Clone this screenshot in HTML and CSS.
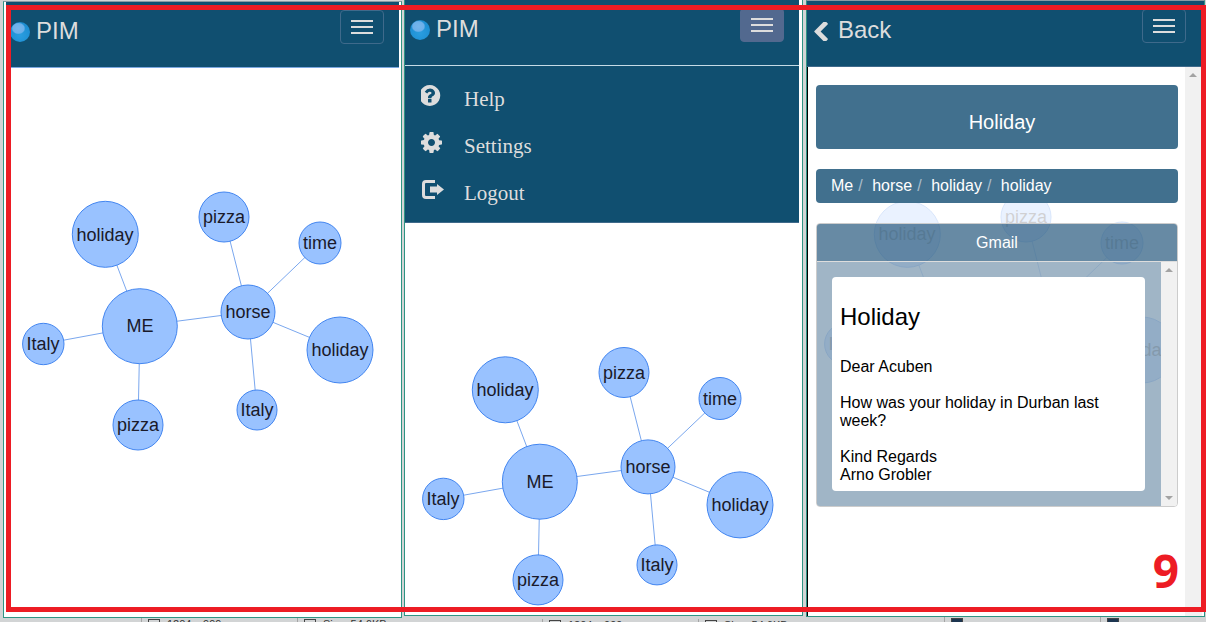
FILE: index.html
```html
<!DOCTYPE html>
<html lang="en">

<head>
    <meta charset="UTF-8">
    <title>PIM</title>
    <link rel="stylesheet" href="styles.css">
</head>

<body>
    <div class="screen">

        <!-- graph view -->
        <div class="column column-one">
            <div class="window window-one">
                <div class="navbar line-blue">
                    <div class="brand"><span class="logo"></span>PIM</div>
                    <div class="burger"><span></span><span></span><span></span></div>
                </div>
                <svg class="graph graph-one" width="395" height="548">
                    <line x1="136" y1="258" x2="101" y2="166"/><line x1="136" y1="258" x2="39" y2="276"/><line x1="136" y1="258" x2="134" y2="357"/><line x1="136" y1="258" x2="244" y2="244"/><line x1="244" y1="244" x2="220" y2="149"/><line x1="244" y1="244" x2="316" y2="175"/><line x1="244" y1="244" x2="336" y2="282"/><line x1="244" y1="244" x2="253" y2="342"/>
                    <circle cx="135.800" cy="258.200" r="37.500"/><text x="136" y="258" dy=".35em">ME</text>
                    <circle cx="101.300" cy="166.300" r="33"/><text x="101" y="166.600" dy=".35em">holiday</text>
                    <circle cx="39.300" cy="276" r="20.700"/><text x="39" y="276" dy=".35em">Italy</text>
                    <circle cx="134" cy="357" r="25"/><text x="134" y="357" dy=".35em">pizza</text>
                    <circle cx="244" cy="244" r="27"/><text x="244" y="244" dy=".35em">horse</text>
                    <circle cx="220" cy="149" r="25"/><text x="220" y="149" dy=".35em">pizza</text>
                    <circle cx="316" cy="175" r="21"/><text x="316" y="175" dy=".35em">time</text>
                    <circle cx="336" cy="282" r="33"/><text x="336" y="282" dy=".35em">holiday</text>
                    <circle cx="253" cy="342" r="20"/><text x="253" y="342" dy=".35em">Italy</text>
                </svg>
            </div>
            <div class="status">
                <div class="status-cell"><i class="status-icon"></i>1204 x 999</div>
                <div class="status-cell"><i class="status-icon"></i>Size: 54.6KB</div>
            </div>
        </div>

        <!-- graph view with the menu open -->
        <div class="column column-two">
            <div class="window window-two">
                <div class="navbar line-pale">
                    <div class="brand"><span class="logo"></span>PIM</div>
                    <div class="burger burger-active"><span></span><span></span><span></span></div>
                </div>
                <ul class="menu">
                    <li>
                        <svg class="menu-icon" viewBox="128 128 1536 1536"><path d="M896 1376v-192q0-14-9-23t-23-9h-192q-14 0-23 9t-9 23v192q0 14 9 23t23 9h192q14 0 23-9t9-23zm256-672q0-88-55.5-163t-138.5-116-170-41q-243 0-371 213-15 24 8 42l132 100q7 6 19 6 16 0 25-12 53-68 86-92 34-24 86-24 48 0 85.5 26t37.5 59q0 38-20 61t-68 45q-63 28-115.5 86.5t-52.5 125.5v36q0 14 9 23t23 9h192q14 0 23-9t9-23q0-19 21.5-49.5t54.5-49.5q32-18 49-28.5t46-35 44.5-48 28-60.5 12.5-81zm384 192q0 209-103 385.5t-279.5 279.5-385.5 103-385.5-103-279.5-279.5-103-385.5 103-385.5 279.5-279.5 385.5-103 385.5 103 279.5 279.5 103 385.5z"/></svg>
                        Help
                    </li>
                    <li>
                        <svg class="menu-icon" viewBox="128 128 1536 1536"><path d="M1152 896q0-106-75-181t-181-75-181 75-75 181 75 181 181 75 181-75 75-181zm512-109v222q0 12-8 23t-20 13l-185 28q-19 54-39 91 35 50 107 138 10 12 10 25t-9 23q-27 37-99 108t-94 71q-12 0-26-9l-138-108q-44 23-91 38-16 136-29 186-7 28-36 28h-222q-14 0-24.5-8.5t-11.5-21.5l-28-184q-49-16-90-37l-141 107q-10 9-25 9-14 0-25-11-126-114-165-168-7-10-7-23 0-12 8-23 15-21 51-66.5t54-70.5q-27-50-41-99l-183-27q-13-2-21-12.5t-8-23.5v-222q0-12 8-23t19-13l186-28q14-46 39-92-40-57-107-138-10-12-10-24 0-10 9-23 26-36 98.5-107.5t94.5-71.5q13 0 26 10l138 107q44-23 91-38 16-136 29-186 7-28 36-28h222q14 0 24.5 8.5t11.5 21.5l28 184q49 16 90 37l142-107q9-9 24-9 13 0 25 10 129 119 165 170 7 8 7 22 0 12-8 23-15 21-51 66.5t-54 70.5q26 50 41 98l183 28q13 2 21 12.5t8 23.5z"/></svg>
                        Settings
                    </li>
                    <li>
                        <svg class="menu-icon logout-icon" viewBox="0 0 24 21"><path class="logout-door" d="M14 2.500H5Q2.500 2.500 2.500 5V16Q2.500 18.500 5 18.500H14"/><path d="M9 7.500h7V5l7 5.500-7 5.500v-2.500H9z"/></svg>
                        Logout
                    </li>
                </ul>
                <svg class="graph graph-two" width="395" height="400" viewBox="0 -.5 395 400">
                    <line x1="136" y1="258" x2="101" y2="166"/><line x1="136" y1="258" x2="39" y2="275.400"/><line x1="136" y1="258" x2="134" y2="356.400"/><line x1="136" y1="258" x2="244" y2="243.400"/><line x1="244" y1="243.400" x2="220" y2="149"/><line x1="244" y1="243.400" x2="316" y2="175"/><line x1="244" y1="243.400" x2="336" y2="281.400"/><line x1="244" y1="243.400" x2="253" y2="341.400"/>
                    <circle cx="135.800" cy="258.200" r="37.500"/><text x="136" y="258" dy=".35em">ME</text>
                    <circle cx="101.300" cy="166.300" r="33"/><text x="101" y="166.600" dy=".35em">holiday</text>
                    <circle cx="39.300" cy="275.400" r="20.700"/><text x="39" y="275.400" dy=".35em">Italy</text>
                    <circle cx="134" cy="356.400" r="25"/><text x="134" y="356.400" dy=".35em">pizza</text>
                    <circle cx="244" cy="243.400" r="27"/><text x="244" y="243.400" dy=".35em">horse</text>
                    <circle cx="220" cy="149" r="25"/><text x="220" y="149" dy=".35em">pizza</text>
                    <circle cx="316" cy="175" r="21"/><text x="316" y="175" dy=".35em">time</text>
                    <circle cx="336" cy="281.400" r="33"/><text x="336" y="281.400" dy=".35em">holiday</text>
                    <circle cx="253" cy="341.400" r="20"/><text x="253" y="341.400" dy=".35em">Italy</text>
                </svg>
            </div>
            <div class="status">
                <div class="status-cell"><i class="status-icon"></i>1204 x 999</div>
                <div class="status-cell"><i class="status-icon"></i>Size: 54.6KB</div>
            </div>
        </div>

        <!-- message view, graph shows faintly behind it -->
        <div class="column column-three">
            <div class="window window-three">
                <div class="navbar line-grey navbar-three">
                    <div class="brand">
                        <svg class="back-icon" viewBox="403 109 1043 1446"><path d="M1427 301l-531 531 531 531q19 19 19 45t-19 45l-166 166q-19 19-45 19t-45-19l-742-742q-19-19-19-45t19-45l742-742q19-19 45-19t45 19l166 166q19 19 19 45t-19 45z"/></svg>
                        Back
                    </div>
                    <div class="burger"><span></span><span></span><span></span></div>
                </div>
                <div class="page">
                    <svg class="graph graph-faint" width="395" height="540">
                        <line x1="136" y1="258" x2="101" y2="166"/><line x1="136" y1="258" x2="39" y2="276"/><line x1="136" y1="258" x2="134" y2="357"/><line x1="136" y1="258" x2="244" y2="244"/><line x1="244" y1="244" x2="220" y2="149"/><line x1="244" y1="244" x2="316" y2="175"/><line x1="244" y1="244" x2="336" y2="282"/><line x1="244" y1="244" x2="253" y2="342"/>
                        <circle cx="135.800" cy="258.200" r="37.500"/><text x="136" y="258" dy=".35em">ME</text>
                        <circle cx="101.300" cy="166.300" r="33"/><text x="101" y="165.800" dy=".35em">holiday</text>
                        <circle cx="39.300" cy="276" r="20.700"/><text x="39" y="276" dy=".35em">Italy</text>
                        <circle cx="134" cy="357" r="25"/><text x="134" y="357" dy=".35em">pizza</text>
                        <circle cx="244" cy="244" r="27"/><text x="244" y="244" dy=".35em">horse</text>
                        <circle cx="220" cy="149" r="25"/><text x="220" y="149" dy=".35em">pizza</text>
                        <circle cx="316" cy="175" r="21"/><text x="316" y="175" dy=".35em">time</text>
                        <circle cx="336" cy="282" r="33"/><text x="336" y="282" dy=".35em">holiday</text>
                        <circle cx="253" cy="342" r="20"/><text x="253" y="342" dy=".35em">Italy</text>
                    </svg>
                    <div class="content">
                        <div class="title-card">Holiday</div>
                        <div class="crumbs">
                            <span>Me</span><span class="crumb-sep">/</span>
                            <span>horse</span><span class="crumb-sep">/</span>
                            <span>holiday</span><span class="crumb-sep">/</span>
                            <span>holiday</span>
                        </div>
                        <div class="mail">
                            <div class="mail-head">Gmail</div>
                            <div class="mail-body">
                                <div class="mail-scroll">
                                    <div class="message">
                                        <h3>Holiday</h3>
                                        <p>Dear Acuben<br><br>How was your holiday in Durban last week?<br><br>Kind Regards<br>Arno Grobler</p>
                                    </div>
                                </div>
                                <div class="scrollbar"><i class="arrow-up"></i><i class="arrow-down"></i></div>
                            </div>
                        </div>
                    </div>
                    <div class="scrollbar scrollbar-page"><i class="arrow-up"></i><i class="arrow-down"></i></div>
                </div>
            </div>
            <div class="status">
                <div class="status-cell"><i class="status-icon status-icon-dark"></i></div>
                <div class="status-cell"><i class="status-icon status-icon-dark"></i></div>
            </div>
        </div>

        <!-- red annotation drawn on top of the screenshots -->
        <div class="annotation"><span class="annotation-number">9</span></div>
    </div>
</body>

</html>
```

FILE: styles.css
```css
* {
    box-sizing: border-box;
    font-family: "Liberation Sans", Arial, sans-serif;
}

body {
    margin: 0;
    overflow: hidden;
}

.screen {
    position: relative;
    display: flex;
    width: 1206px;
    height: 622px;
    overflow: hidden;
    background: #d2d4d5;
}

.column {
    flex: none;
    width: 399px;
}

.column-one {
    margin: 1px 0 0 3px;
}

.column-two {
    margin-left: 2px;
}

.column-three {
    margin: 0 0 0 3px;
}

.window {
    overflow: hidden;
    background: #fff;
    border: 1px solid #2f9484;
    border-top-color: #8b9aa3;
}

.window-one {
    height: 617px;
    padding: 0 2px;
}

.window-two {
    height: 616px;
    padding-right: 3px;
    border-top: 0;
}

.window-three {
    height: 617px;
}

.navbar {
    display: flex;
    align-items: flex-start;
    height: 66px;
    padding: 8px 15px 0 4px;
    background: #104f70;
    border-bottom: 1px solid #104f70;
}

.navbar-three {
    padding-right: 18px;
    padding-left: 7px;
}

.line-blue {
    border-bottom-color: #7aa7e0;
}

.line-pale {
    padding-left: 5px;
    border-bottom-color: #c5dbe6;
}

.line-grey {
    border-bottom-color: #3f6a8b;
}

.brand {
    display: flex;
    align-items: center;
    gap: 6px;
    height: 42px;
    font-size: 24px;
    color: #ddd;
}

.logo {
    width: 20px;
    height: 20px;
    margin-top: 2px;
    border-radius: 50%;
    background:
        radial-gradient(ellipse 7px 6px at 42% 32%, #76b6ec 0, #6cb0ea 80%, transparent 100%),
        radial-gradient(circle at 50% 65%, #2a9ee0, #1787cc);
}

.back-icon {
    width: 14px;
    height: 19px;
    margin-top: 3px;
    margin-right: 4px;
    fill: #ddd;
}

.burger {
    display: flex;
    flex-direction: column;
    justify-content: center;
    gap: 4px;
    width: 44px;
    height: 34px;
    margin-left: auto;
    padding: 0 10px;
    border: 1px solid #3f6a8b;
    border-radius: 4px;
}

.burger span {
    height: 2px;
    background: #ddd;
}

.burger-active {
    background: #52698f;
    border-color: #52698f;
}

.menu {
    margin: 0;
    padding: 10px 0 5px 16px;
    list-style: none;
    background: #104f70;
    border-bottom: 1px solid #3f6a8b;
}

.menu li {
    display: flex;
    align-items: center;
    height: 47px;
    font-family: "Liberation Serif", "Times New Roman", serif;
    font-size: 21px;
    color: #ddd;
}

.menu-icon {
    width: 21px;
    height: 21px;
    margin: 0 22px 8px 0;
    fill: #ddd;
}

.logout-icon {
    width: 24px;
    margin-right: 19px;
}

.logout-door {
    fill: none;
    stroke: #ddd;
    stroke-width: 3;
}

.graph {
    display: block;
}

.graph line {
    stroke: #7aa7ee;
    stroke-width: 1;
}

.graph circle {
    fill: #99c2ff;
    stroke: #4285f0;
    stroke-width: 1;
}

.graph text {
    font-size: 18px;
    text-anchor: middle;
    fill: #1a1a2a;
}

.graph-one {
    margin-left: -2px;
}

.graph-two {
    margin-left: -1px;
}

.graph-faint {
    position: absolute;
    top: 1px;
    left: -2px;
    opacity: 0.2;
}

.page {
    position: relative;
    display: flex;
    height: 560px;
    border-left: 1px solid #000;
}

.content {
    position: relative;
    width: 377px;
    padding: 18px 7px 0 8px;
}

.title-card {
    height: 64px;
    padding: 24px 0 0 10px;
    font-size: 20px;
    line-height: 26px;
    text-align: center;
    color: #fff;
    background: #41708e;
    border-radius: 4px;
}

.crumbs {
    display: flex;
    height: 34px;
    margin-top: 20px;
    padding-left: 15px;
    font-size: 16px;
    line-height: 33px;
    color: #fff;
    background: #41708e;
    border-radius: 4px;
}

.crumb-sep {
    margin: 0 9.500px 0 5px;
    color: #a9bccb;
}

.mail {
    height: 284px;
    margin-top: 20px;
    border: 1px solid #ccc;
    border-radius: 4px;
    overflow: hidden;
}

.mail-head {
    height: 38px;
    font-size: 16px;
    line-height: 37px;
    text-align: center;
    color: #fff;
    background: rgba(17, 72, 113, 0.64);
    border-bottom: 1px solid #ddd;
}

.mail-body {
    display: flex;
    height: 244px;
}

.mail-scroll {
    flex: 1;
    padding: 15px 16px 15px 15px;
    background: rgba(17, 70, 112, 0.4);
}

.message {
    height: 214px;
    padding: 0 8px;
    color: #000;
    background: #fff;
    border-radius: 4px;
}

.message h3 {
    margin: 0;
    padding: 27px 0 28px;
    font-size: 24px;
    font-weight: 400;
    line-height: 26px;
}

.message p {
    margin: 0;
    font-size: 16px;
    line-height: 18px;
}

.scrollbar {
    position: relative;
    flex: none;
    width: 16px;
    background: #f1f1f1;
}

.scrollbar-page {
    width: 17px;
}

.arrow-up,
.arrow-down {
    position: absolute;
    left: 4px;
    border-right: 4px solid transparent;
    border-left: 4px solid transparent;
}

.arrow-up {
    top: 6px;
    border-bottom: 4px solid #a3a3a3;
}

.arrow-down {
    bottom: 6px;
    border-top: 4px solid #a3a3a3;
}

.status {
    display: flex;
    height: 12px;
    padding-left: 138px;
    overflow: hidden;
    font-size: 11px;
    line-height: 12px;
    color: #333;
}

.column-two .status {
    padding-top: 3px;
}

.status-cell {
    display: flex;
    flex: none;
    width: 156px;
    padding-left: 6px;
    border-left: 1px solid #a5a5a5;
}

.status-icon {
    width: 12px;
    height: 10px;
    margin: 1px 7px 0 0;
    border: 1px solid #444;
}

.status-icon-dark {
    background: #1d3550;
}

.annotation {
    position: absolute;
    top: 5px;
    left: 6px;
    width: 1200px;
    height: 607px;
    border: 5px solid #ed1c24;
}

.annotation-number {
    position: absolute;
    right: 22px;
    bottom: 9px;
    font-family: "Open Sans", sans-serif;
    font-size: 46px;
    font-weight: 700;
    line-height: 56px;
    color: #ed1c24;
}
```
